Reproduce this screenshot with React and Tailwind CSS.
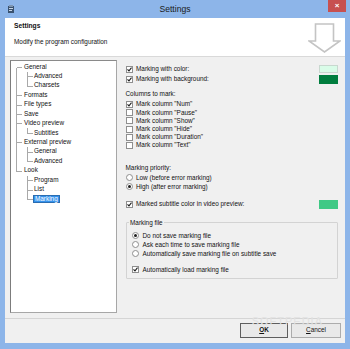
const treeItems = [
  { label: 'General', level: 0 },
  { label: 'Advanced', level: 1 },
  { label: 'Charsets', level: 1 },
  { label: 'Formats', level: 0 },
  { label: 'File types', level: 0 },
  { label: 'Save', level: 0 },
  { label: 'Video preview', level: 0 },
  { label: 'Subtitles', level: 1 },
  { label: 'External preview', level: 0 },
  { label: 'General', level: 1 },
  { label: 'Advanced', level: 1 },
  { label: 'Look', level: 0 },
  { label: 'Program', level: 1 },
  { label: 'List', level: 1 },
  { label: 'Marking', level: 1, selected: true },
];

const columns = [
  { label: 'Mark column "Num"', on: true },
  { label: 'Mark column "Pause"' },
  { label: 'Mark column "Show"' },
  { label: 'Mark column "Hide"' },
  { label: 'Mark column "Duration"' },
  { label: 'Mark column "Text"' },
];

const ROW = 9.45;
const cy = (i) => Math.round(5.725 + ROW * i) + 0.5;

function Check({ on }) {
  return (
    <span className="w-[7px] h-[7px] shrink-0 border border-[#8f8f8f] bg-white flex items-center justify-center">
      {on && (
        <svg width="5" height="5" viewBox="0 0 5 5">
          <path d="M0.5 2.3 L2 3.9 L4.5 0.7" fill="none" stroke="#1e1e1e" strokeWidth="1.1" />
        </svg>
      )}
    </span>
  );
}

function Radio({ on }) {
  return (
    <span className="w-[7px] h-[7px] shrink-0 rounded-full border border-[#8f8f8f] bg-white flex items-center justify-center">
      {on && <span className="w-[3px] h-[3px] rounded-full bg-[#1e1e1e]" />}
    </span>
  );
}

function TreeLines() {
  const roots = [0, 3, 4, 5, 6, 8, 11];
  const kids = [1, 2, 7, 9, 10, 12, 13, 14];
  const groups = [
    [0, 2],
    [6, 7],
    [8, 10],
    [11, 14],
  ];
  return (
    <svg className="absolute inset-0 pointer-events-none" width="106" height="251">
      <g stroke="#a9a9a9" strokeWidth="1" shapeRendering="crispEdges">
        <line x1="5.5" y1={cy(0)} x2="5.5" y2={cy(11)} />
        {roots.map((i) => (
          <line key={'r' + i} x1="5.5" y1={cy(i)} x2="11" y2={cy(i)} />
        ))}
        {groups.map(([p, l]) => (
          <line key={'g' + p} x1="16.5" y1={cy(p) + 4} x2="16.5" y2={cy(l)} />
        ))}
        {kids.map((i) => (
          <line key={'k' + i} x1="16.5" y1={cy(i)} x2="22" y2={cy(i)} />
        ))}
      </g>
    </svg>
  );
}

export default function App() {
  return (
    <div className="w-[350px] h-[349px] bg-[#8db5e9] flex flex-col font-['Liberation_Sans',Arial,sans-serif] text-[6.4px] leading-none text-[#111] overflow-hidden">
      {/* title bar */}
      <div className="h-[18px] shrink-0 grid grid-cols-[1fr_auto_1fr]">
        <div className="pl-[8px] pt-[5px]">
          <svg width="6" height="8" viewBox="0 0 6 8">
            <rect x="0" y="1" width="6" height="7" fill="#3b5370" />
            <rect x="1" y="0" width="4" height="2" fill="#7d94b0" />
            <rect x="1" y="3" width="4" height="1" fill="#c9d6e6" />
            <rect x="1" y="5" width="3" height="1" fill="#c9d6e6" />
          </svg>
        </div>
        <div className="text-[8.6px] text-[#1a1a1a] pt-[5px]">Settings</div>
        <div className="flex justify-end pr-[4px]">
          <div className="w-[18px] h-[12px] bg-[#c75050] flex items-center justify-center text-white text-[8px] font-bold">
            ×
          </div>
        </div>
      </div>

      {/* client area */}
      <div className="flex-1 mx-[5px] mb-[6px] bg-[#f0f0f0] flex flex-col relative">
        <div className="h-[39px] shrink-0 bg-white border-b border-[#d9d9d9] flex justify-between">
          <div className="pl-[9px] pt-[4px] flex flex-col">
            <div className="h-[8px] flex items-center font-bold text-[6.7px]">Settings</div>
            <div className="h-[8px] mt-[8px] flex items-center">Modify the program configuration</div>
          </div>
          <div className="pr-[4px] pt-[5px]">
            <svg width="33" height="30" viewBox="0 0 33 30">
              <polygon
                points="7.5,1 25.5,1 25.5,18 32,18 16.5,29 1,18 7.5,18"
                fill="#fff"
                stroke="#c4c4c4"
                strokeWidth="1.6"
                strokeLinejoin="miter"
              />
            </svg>
          </div>
        </div>

        {/* body */}
        <div className="flex-1 flex pl-[4.5px] pt-[3px] pb-[5px]">
          <div className="relative w-[107.5px] bg-white border border-[#a7a7a7] border-l-[#7c7c7c] border-t-[#8a8a8a] pt-[1px]">
            <TreeLines />
            {treeItems.map((it, i) => (
              <div
                key={i}
                className={`h-[9.45px] flex items-center ${it.level === 0 ? 'pl-[12.2px]' : 'pl-[22.2px]'}`}
              >
                <span
                  className={
                    it.selected
                      ? 'h-[8.5px] flex items-center px-[1.3px] bg-[#3592ec] text-white border border-[#2a6cb0]'
                      : 'px-[1.3px]'
                  }
                >
                  {it.label}
                </span>
              </div>
            ))}
          </div>

          <div className="flex-1 flex flex-col pl-[8.5px] pr-[7px] pt-[4px]">
            <div className="h-[10px] flex items-center gap-[3.5px]">
              <Check on />
              <span className="flex-1">Marking with color:</span>
              <span className="w-[19px] h-[8px] bg-[#d9fce8] border border-[#c8d8cf]" />
            </div>
            <div className="h-[10px] flex items-center gap-[3.5px]">
              <Check on />
              <span className="flex-1">Marking with background:</span>
              <span className="w-[19px] h-[9px] bg-[#007d3e]" />
            </div>

            <div className="h-[8px] mt-[6.5px] flex items-center">Columns to mark:</div>
            <div className="mt-[2px] flex flex-col">
              {columns.map((c) => (
                <div key={c.label} className="h-[8.2px] flex items-center gap-[3.5px]">
                  <Check on={c.on} />
                  <span>{c.label}</span>
                </div>
              ))}
            </div>

            <div className="h-[8px] mt-[14.3px] flex items-center">Marking priority:</div>
            <div className="h-[9px] mt-[1.5px] flex items-center gap-[3.5px]">
              <Radio />
              <span>Low (before error marking)</span>
            </div>
            <div className="h-[9px] flex items-center gap-[3.5px]">
              <Radio on />
              <span>High (after error marking)</span>
            </div>

            <div className="h-[10px] mt-[8.2px] flex items-center gap-[3.5px]">
              <Check on />
              <span className="flex-1">Marked subtitle color in video preview:</span>
              <span className="w-[19px] h-[9px] bg-[#3fc985]" />
            </div>

            <fieldset className="mt-[9.3px] ml-[0.5px] border border-[#d3d3d3] rounded-[1px] pl-[5px] pb-[3.5px]">
              <legend className="ml-[-3px] px-[1px] h-[8px] leading-[8px]">Marking file</legend>
              <div className="h-[9px] mt-[4.5px] flex items-center gap-[3.5px]">
                <Radio on />
                <span>Do not save marking file</span>
              </div>
              <div className="h-[9px] flex items-center gap-[3.5px]">
                <Radio />
                <span>Ask each time to save marking file</span>
              </div>
              <div className="h-[9px] flex items-center gap-[3.5px]">
                <Radio />
                <span>Automatically save marking file on subtitle save</span>
              </div>
              <div className="h-[9px] mt-[7px] flex items-center gap-[3.5px]">
                <Check on />
                <span>Automatically load marking file</span>
              </div>
            </fieldset>
          </div>
        </div>

        {/* footer */}
        <div className="h-[25px] shrink-0 border-t border-[#d5d5d5] flex justify-end gap-[3px] pr-[4px] pt-[4px]">
          <button
            type="button"
            className="w-[48px] h-[15px] border border-[#5e5e5e] bg-[#e9e9e9] text-[6.4px] font-semibold leading-none"
          >
            <span className="underline">O</span>K
          </button>
          <button
            type="button"
            className="w-[50px] h-[15px] border border-[#acacac] bg-[#e9e9e9] text-[6.4px] leading-none"
          >
            <span className="underline">C</span>ancel
          </button>
        </div>

        <div className="absolute right-[22px] bottom-[16px] text-[11px] tracking-[1px] text-[#e2e2e2] pointer-events-none select-none">
          SOFTPEDIA
        </div>
      </div>
    </div>
  );
}
